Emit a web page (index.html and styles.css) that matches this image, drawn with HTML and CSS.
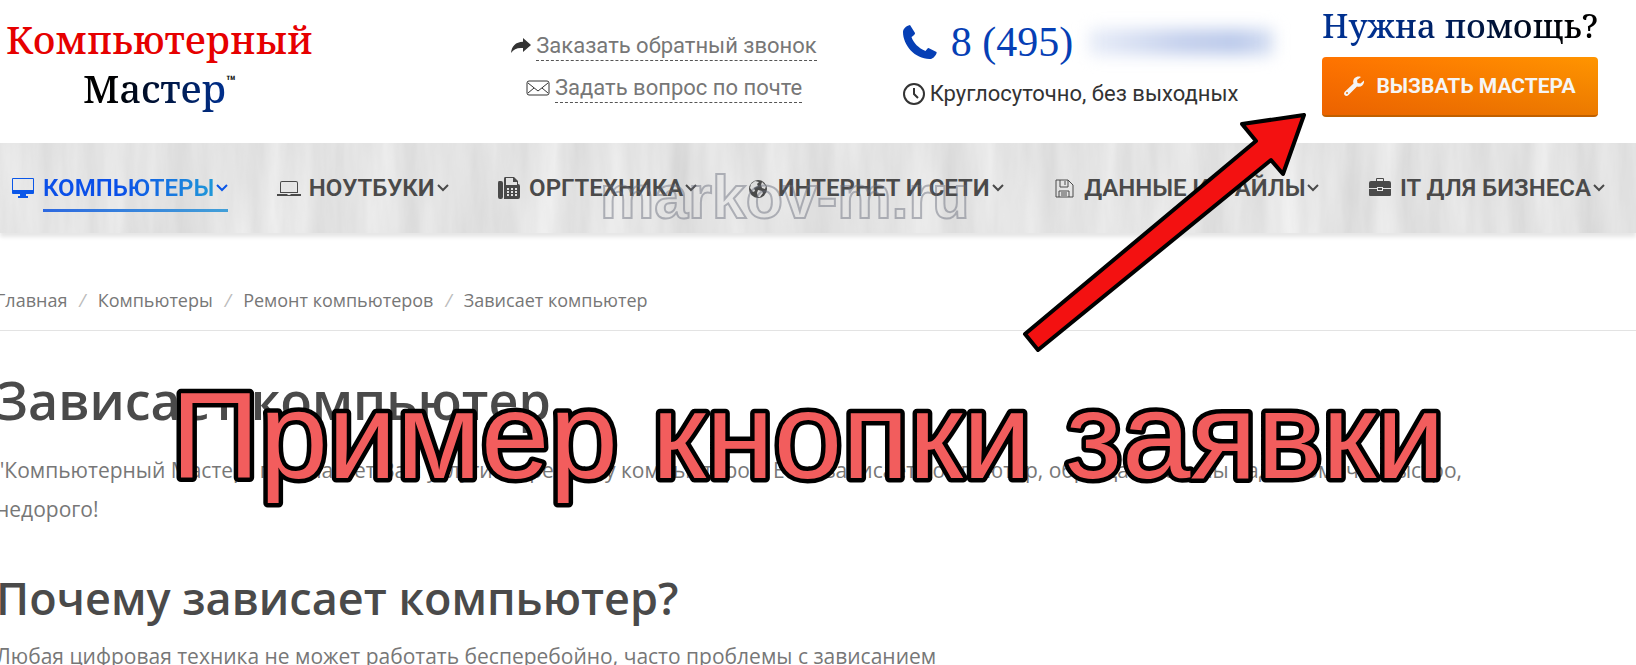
FILE: index.html
```
<!DOCTYPE html>
<html lang="ru">
<head>
    <meta charset="UTF-8">
    <meta name="viewport" content="width=device-width, initial-scale=1.0">
    <title>Зависает компьютер - Компьютерный Мастер</title>
    <link rel="stylesheet" href="styles.css">
</head>
<body>
    <header class="header">
        <a class="logo" href="#">
            <span class="logo-top">Компьютерный</span>
            <span class="logo-bottom"><span class="logo-name">Мастер</span><span class="logo-tm">™</span></span>
        </a>

        <div class="contacts">
            <div class="contact-row">
                <svg class="icon-share" viewBox="0 0 20 16"><path d="M12 0l8 7-8 7v-4C6 9.500 3 11 0 15c.8-7 4.500-11 12-11.300z"/></svg>
                <a href="#">Заказать обратный звонок</a>
            </div>
            <div class="contact-row">
                <svg class="icon-mail" viewBox="0 0 24 16"><rect x="1" y="1" width="22" height="14" rx="2"/><path d="M2 3l10 8 10-8M2 13l6-5M22 13l-6-5"/></svg>
                <a href="#">Задать вопрос по почте</a>
            </div>
        </div>

        <div class="phone">
            <a class="phone-number" href="#">
                <svg class="icon-phone" viewBox="0 0 34 34"><path d="M7 0l5 8c.5 1-2 3-3.500 4 2 6 7 11 14 14 1-1 2-3 3-3l8 4c.8.500-2 7-7 7C12 34 0 20 0 7c0-3 3-6 7-7z"/></svg>
                <span>8 (495)</span>
                <span class="phone-hidden"></span>
            </a>
            <div class="worktime">
                <svg class="icon-clock" viewBox="0 0 22 22"><circle cx="11" cy="11" r="10"/><path d="M11 5v6l4 4"/></svg>
                <span>Круглосуточно, без выходных</span>
            </div>
        </div>

        <div class="help">
            <div class="help-title">Нужна помощь?</div>
            <button class="call-button" type="button">
                <svg class="icon-wrench" viewBox="0 0 20 20"><path d="M17 1l-4 3 .5 3L16.500 7.500 20 4.500c.6 4-3 7.500-7 6L4.500 19c-2.500 2.500-6-.8-3.700-3.300L9.500 7.500C8 3.500 12-.8 17 1z"/><circle cx="3" cy="17" r="1"/></svg>
                Вызвать мастера
            </button>
        </div>
    </header>

    <nav class="menu">
        <svg class="wood">
            <filter id="grain" x="0" y="0" width="100%" height="100%" color-interpolation-filters="sRGB">
                <feTurbulence type="fractalNoise" baseFrequency="0.03 0.004" numOctaves="5" seed="7"/>
                <feColorMatrix values="0.14 0 0 0 0.82  0.14 0 0 0 0.82  0.14 0 0 0 0.82  0 0 0 0 1"/>
            </filter>
            <rect width="100%" height="100%" filter="url(#grain)"/>
        </svg>
        <a class="menu-item active" href="#">
            <svg class="menu-icon" viewBox="0 0 24 22"><path fill-rule="evenodd" d="M2 1h20q1 0 1 1v14q0 1-1 1h-7v2h2v2H7v-2h2v-2H2q-1 0-1-1V2q0-1 1-1zm0 1v11h20V2z"/></svg>
            <span class="menu-label"><span class="menu-text">Компьютеры</span><svg class="chevron" viewBox="0 0 12 8"><path d="M1 1l5 5 5-5"/></svg></span>
        </a>
        <a class="menu-item" href="#">
            <svg class="menu-icon" viewBox="0 0 24 22"><path fill-rule="evenodd" d="M5 4h14q2 0 2 2v10H3V6q0-2 2-2zm0 1q-1 0-1 1v9h16V6q0-1-1-1zM0 17h10l1 1h2l1-1h10v2H0z"/></svg>
            <span class="menu-label"><span class="menu-text">Ноутбуки</span><svg class="chevron" viewBox="0 0 12 8"><path d="M1 1l5 5 5-5"/></svg></span>
        </a>
        <a class="menu-item" href="#">
            <svg class="menu-icon" viewBox="0 0 24 22"><path fill-rule="evenodd" d="M2 4h2q2 0 2 2v14q0 2-2 2H3q-2 0-2-2V6q0-2 1-2zM8 0h9l4 4v3q2 0 2 2v11q0 2-2 2H7V2q0-2 1-2zm1 1v7h11V5h-4V1zM10 11v2h2v-2zm4 0v2h2v-2zm4 0v2h2v-2zm-8 3v2h2v-2zm4 0v2h2v-2zm4 0v2h2v-2zm-8 3v2h2v-2zm4 0v2h2v-2zm4 0v2h2v-2z"/></svg>
            <span class="menu-label"><span class="menu-text">Оргтехника</span><svg class="chevron" viewBox="0 0 12 8"><path d="M1 1l5 5 5-5"/></svg></span>
        </a>
        <a class="menu-item" href="#">
            <svg class="menu-icon" viewBox="0 0 24 22"><circle cx="12" cy="12" r="9"/><path class="land" d="M5 7l4-3 4 1-2 2 1 2-4 2 1 3-2 1-3-4zM16 5l4 4-1 3-3-1-1-3zM12 13l4 1 1 2-3 4-2 0-1-4z"/></svg>
            <span class="menu-label"><span class="menu-text">Интернет и сети</span><svg class="chevron" viewBox="0 0 12 8"><path d="M1 1l5 5 5-5"/></svg></span>
        </a>
        <a class="menu-item" href="#">
            <svg class="menu-icon line" viewBox="0 0 24 22"><path d="M4 3h12l5 5v12H4zM8 3v7h8V3M13 4v4M7 20v-6h10v6M9 16h6M9 18h6"/></svg>
            <span class="menu-label"><span class="menu-text">Данные и файлы</span><svg class="chevron" viewBox="0 0 12 8"><path d="M1 1l5 5 5-5"/></svg></span>
        </a>
        <a class="menu-item" href="#">
            <svg class="menu-icon" viewBox="0 0 24 22"><path fill-rule="evenodd" d="M8 4V2q0-1 1-1h6q1 0 1 1v2h5q2 0 2 2v5h-8v-1H9v1H1V6q0-2 2-2zm1 0h6V2H9zM1 12h8v2h6v-2h8v6q0 1-1 1H2q-1 0-1-1zM10 11h4v2h-4z"/></svg>
            <span class="menu-label"><span class="menu-text">IT для бизнеса</span><svg class="chevron" viewBox="0 0 12 8"><path d="M1 1l5 5 5-5"/></svg></span>
        </a>
    </nav>

    <main class="content">
        <div class="breadcrumbs">
            <a href="#">Главная</a><i>/</i><a href="#">Компьютеры</a><i>/</i><a href="#">Ремонт компьютеров</a><i>/</i><span>Зависает компьютер</span>
        </div>
        <h1>Зависает компьютер</h1>
        <p class="lead">"Компьютерный Мастер" предлагает Вам услуги по ремонту компьютеров. Если зависает компьютер, обращайтесь, мы рады помочь. Быстро, недорого!</p>
        <h2>Почему зависает компьютер?</h2>
        <p>Любая цифровая техника не может работать бесперебойно, часто проблемы с зависанием</p>
    </main>

    <!-- notes drawn over the page -->
    <svg class="overlay" viewBox="0 0 1636 665">
        <text class="watermark" x="600" y="218">markov-m.ru</text>
        <path class="arrow" d="M1304 115L1242 124l14 17L1025 334l13 16 233-190 12 14z"/>
        <text class="caption" x="171" y="478">Пример кнопки заявки</text>
    </svg>
</body>
</html>
```
FILE: styles.css
```
* {
    box-sizing: border-box;
}
body {
    margin: 0;
    font-family: "Open Sans", Arial, sans-serif;
    color: #777;
    background: #fff;
    position: relative;
    overflow: hidden;
}
a {
    color: inherit;
    text-decoration: none;
}

/* header */
.header {
    display: grid;
    grid-template-columns: 420fr 478fr 420fr 274fr;
    align-items: start;
    height: 143px;
    padding: 0 38px 0 6px;
    font-family: Roboto, Arial, sans-serif;
}
.logo {
    display: flex;
    flex-direction: column;
    align-items: center;
    justify-self: start;
    padding-top: 15px;
    font-family: "Noto Serif", "Liberation Serif", serif;
    font-size: 38px;
    font-weight: 500;
    line-height: 49px;
}
.logo-top {
    color: #e60000;
}
.logo-bottom {
    display: flex;
    align-items: flex-start;
}
.logo-name {
    color: transparent;
    background: linear-gradient(90deg, #000 20%, #00308f);
    background-clip: text;
    -webkit-background-clip: text;
}
.logo-tm {
    font: bold 16px/36px Roboto, sans-serif;
    color: #111;
}
.contacts {
    display: flex;
    flex-direction: column;
    align-items: center;
    gap: 12px;
    padding-top: 31px;
    font-size: 22px;
    line-height: 29px;
    white-space: nowrap;
}
.contact-row {
    display: flex;
    align-items: center;
    gap: 5px;
}
.contact-row a {
    border-bottom: 1px dashed #555;
}
.icon-share {
    width: 20px;
    height: 16px;
    fill: #333;
}
.icon-mail {
    width: 24px;
    height: 16px;
    fill: none;
    stroke: #333;
}
.phone {
    padding-top: 18px;
    color: #333;
    white-space: nowrap;
}
.phone-number {
    display: flex;
    align-items: center;
    font: 42px/48px "Liberation Serif", serif;
    color: #063fb5;
}
.icon-phone {
    width: 34px;
    height: 34px;
    margin-right: 14px;
    fill: #063fb5;
}
.phone-hidden {
    width: 184px;
    height: 26px;
    margin-left: 16px;
    background: linear-gradient(90deg, #e8edf8, #c3cfec 50%, #b9c8ea 80%, #d4def2);
    filter: blur(8px);
}
.worktime {
    display: flex;
    align-items: center;
    gap: 5px;
    margin-top: 14px;
    font-size: 22px;
    line-height: 28px;
}
.icon-clock {
    width: 22px;
    height: 22px;
    fill: none;
    stroke: #333;
    stroke-width: 2;
}
.help {
    padding-top: 6px;
}
.help-title {
    font-family: "Noto Serif", "Liberation Serif", serif;
    font-size: 33px;
    font-weight: 500;
    line-height: 40px;
    white-space: nowrap;
    color: transparent;
    background: linear-gradient(90deg, #00308f 20%, #000 90%);
    background-clip: text;
    -webkit-background-clip: text;
}
.call-button {
    display: flex;
    align-items: center;
    justify-content: center;
    gap: 12px;
    width: 100%;
    height: 60px;
    margin-top: 11px;
    border: 0;
    border-bottom: 2px solid #c06000;
    border-radius: 4px;
    background: linear-gradient(180deg, transparent, rgba(190, 60, 0, 0.3)), linear-gradient(90deg, #ff7300, #ff9500);
    color: #f5f5f5;
    font: bold 21px Roboto, Arial, sans-serif;
    text-transform: uppercase;
}
.icon-wrench {
    width: 20px;
    height: 20px;
    fill: #f5f5f5;
}
.icon-wrench circle {
    fill: #f07000;
}

/* menu */
.menu {
    position: relative;
    display: flex;
    justify-content: space-between;
    align-items: center;
    height: 90px;
    padding: 0 31px 0 11px;
    background: #e2e2e2;
    box-shadow: 0 4px 4px rgba(0, 0, 0, 0.1);
    font: 600 24px/30px Roboto, Arial, sans-serif;
    color: #4a4a4a;
    text-transform: uppercase;
}
.wood {
    position: absolute;
    top: 0;
    left: 0;
    width: 100%;
    height: 100%;
}
.menu-item {
    position: relative;
    display: flex;
    align-items: center;
    gap: 8px;
    white-space: nowrap;
}
.menu-icon {
    width: 24px;
    height: 22px;
    fill: currentColor;
}
.menu-icon .land {
    fill: #ddd;
}
.menu-icon.line {
    fill: none;
    stroke: currentColor;
}
.menu-label {
    display: flex;
    align-items: center;
    gap: 2px;
    padding: 9px 0 6px;
    border-bottom: 3px solid transparent;
}
.chevron {
    width: 12px;
    height: 8px;
    fill: none;
    stroke: currentColor;
    stroke-width: 2;
}
.active {
    color: #0b57e8;
}
.active .menu-label {
    border-image: linear-gradient(90deg, #2d68e0, #42a0d8) 1;
    border-width: 0 0 3px;
}
.active .menu-text {
    color: transparent;
    background: linear-gradient(90deg, #0b50e8 45%, #2098d8);
    background-clip: text;
    -webkit-background-clip: text;
}

/* content */
.content {
    margin-left: -4px;
}
.breadcrumbs {
    padding: 54px 0 17px;
    border-bottom: 1px solid #e3e3e3;
    font-size: 18px;
    line-height: 26px;
}
.breadcrumbs i {
    margin: 0 12px;
    color: #bbb;
}
h1,
h2 {
    margin: 0;
    color: #4a4a4a;
    font-weight: 600;
}
h1 {
    padding-top: 34px;
    font-size: 52px;
    line-height: 70px;
}
h2 {
    padding: 39px 0 9px;
    font-size: 45px;
    line-height: 60px;
}
p {
    margin: 0;
    font-size: 21px;
    line-height: 39px;
}
.lead {
    max-width: 1500px;
    padding-top: 16px;
}

/* overlay */
.overlay {
    position: absolute;
    top: 0;
    left: 0;
    width: 100%;
    pointer-events: none;
}
.watermark {
    font: bold 61px "Liberation Sans", Arial, sans-serif;
    fill: none;
    stroke: rgba(100, 105, 120, 0.45);
    stroke-width: 2;
}
.arrow {
    fill: #f31111;
    stroke: #000;
    stroke-width: 4;
    stroke-linejoin: round;
}
.caption {
    font: 123px "Liberation Sans", Arial, sans-serif;
    fill: #f25d5d;
    stroke: #000;
    stroke-width: 9;
    stroke-linejoin: round;
    paint-order: stroke;
}
```
